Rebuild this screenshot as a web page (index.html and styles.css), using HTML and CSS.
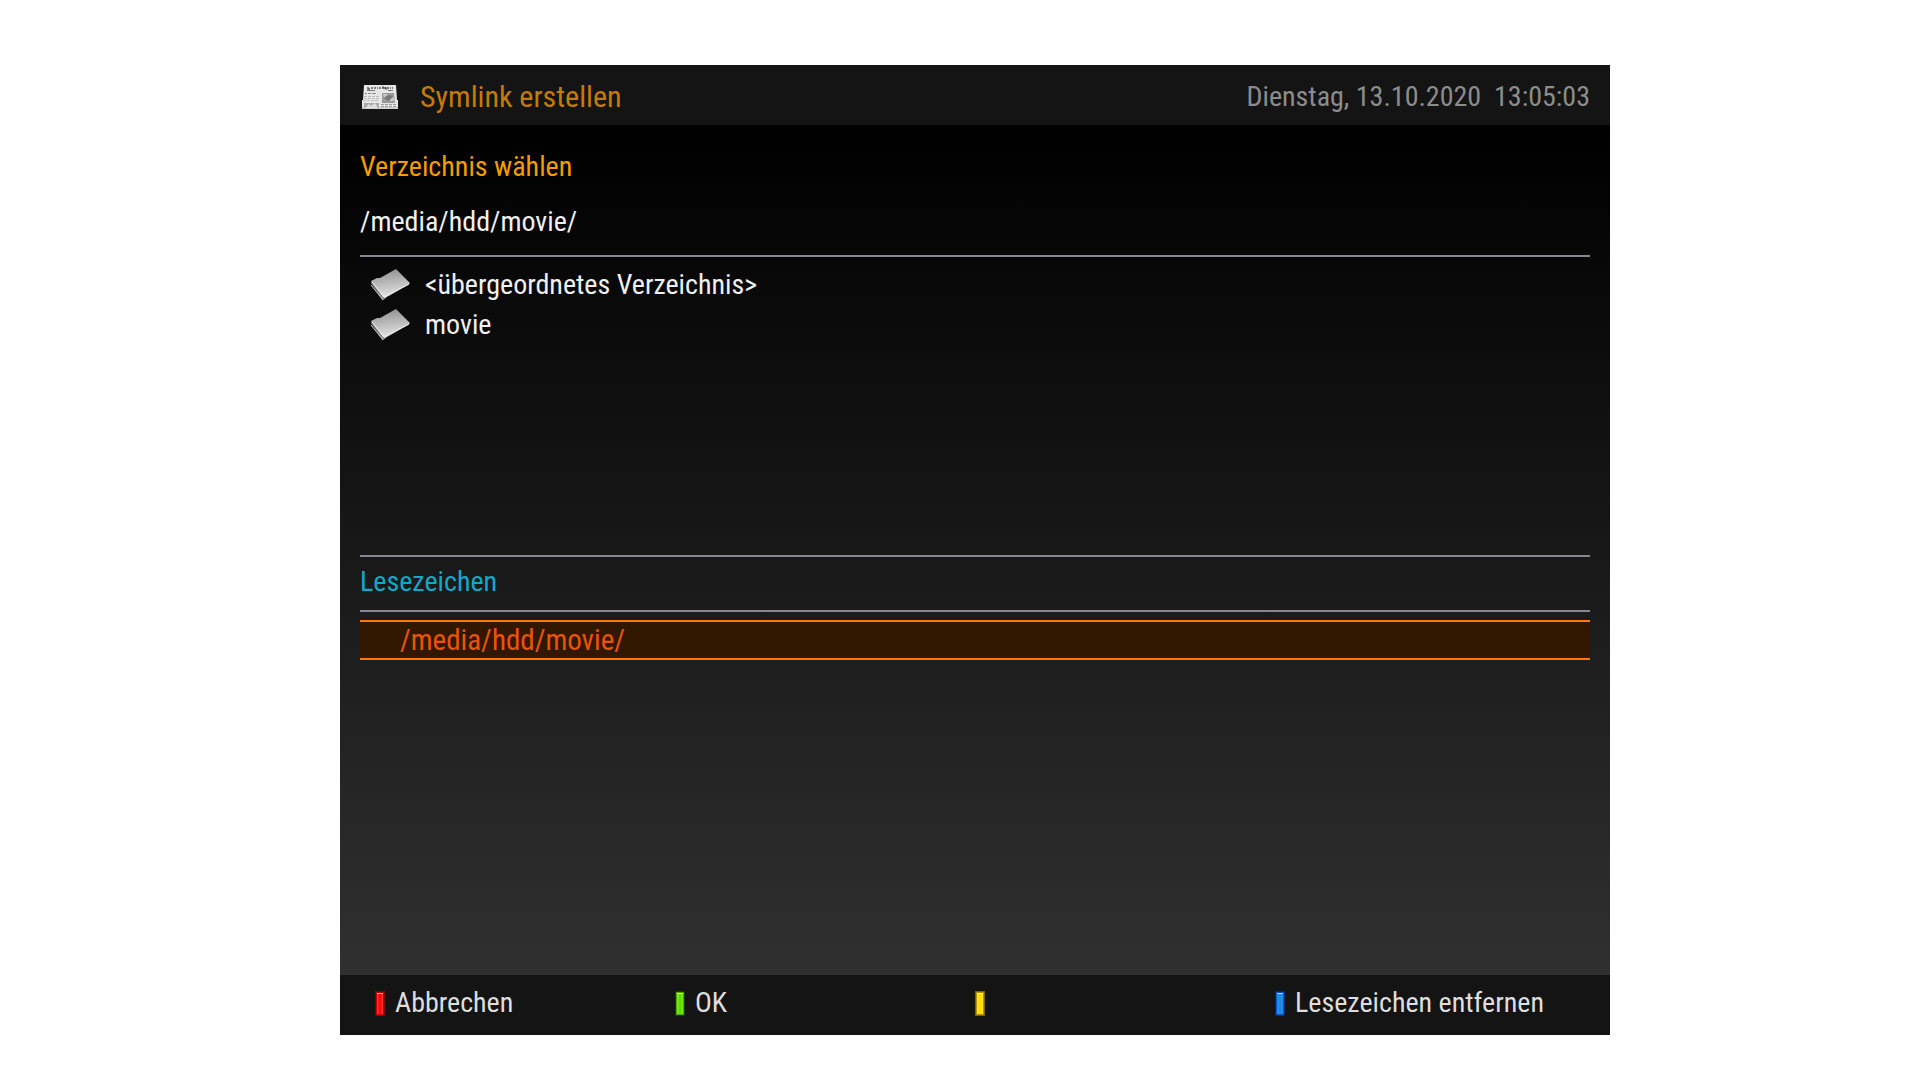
FILE: index.html
```html
<!DOCTYPE html>
<html lang="de">
<head>
  <meta charset="UTF-8" />
  <meta name="viewport" content="width=device-width, initial-scale=1.0" />
  <title>Symlink erstellen</title>
  <link rel="stylesheet" href="styles.css">
</head>
<body>
  <div class="screen">
    <header class="header">
      <svg class="news-icon" viewBox="0 0 36 24" aria-hidden="true">
        <path d="M2 0H34L35 15H36V24H0V15H1Z" fill="#e6e6e6"/>
        <path d="M0 22H36V24H0Z" fill="#d0d0d0"/>
        <path d="M6 2v2h2M9 3h2M12 3h2M15 3h1M17 3h2M21 4V2l3 2V2M25 3h2M28 3h1M30 3h1" fill="none" stroke="#555" stroke-width="1.400"/>
        <path d="M5 5.500h8M26 5.500h5" stroke="#777"/>
        <path d="M3 8.500h2M6 8.500h3M10 8.500h4" stroke="#888"/>
        <path d="M2 11.500h16M2 13.500h16M1 15.500h15" stroke="#bbb" stroke-dasharray="3 1"/>
        <path d="M20 8H32L33 18H20Z" fill="#999"/>
        <path d="M21 9h5l-4 4zM28 14l4-2v4h-5z" fill="#c8c8c8"/>
        <path d="M22 13l5-3 4 1-4 5z" fill="#777"/>
        <path d="M2 18H17V23H2Z" fill="#aaa"/>
        <path d="M3 23l4-4 2 2 4-3 3 5z" fill="#ddd"/>
        <path d="M19 19.500h16M19 21.500h16" stroke="#999" stroke-dasharray="3 1"/>
      </svg>
      <h1 class="title">Symlink erstellen</h1>
      <time class="clock" datetime="2020-10-13T13:05:03">Dienstag, 13.10.2020&nbsp; 13:05:03</time>
    </header>

    <main class="content">
      <section class="directory">
        <h2>Verzeichnis wählen</h2>
        <p class="path">/media/hdd/movie/</p>
        <ul class="file-list">
          <li>
            <svg class="folder-icon" viewBox="0 0 40 32" aria-hidden="true">
              <defs>
                <linearGradient id="folder" x1="0.400" y1="0" x2="0.550" y2="1">
                  <stop offset="0" stop-color="#909090"/>
                  <stop offset="1" stop-color="#e8e8e8"/>
                </linearGradient>
              </defs>
              <path d="M1 14L13 31L16 29L3 11Z" fill="#888"/>
              <path d="M1 16L13 31" stroke="#ddd"/>
              <path d="M1 12L7 9L10 9L26 0L40 14L38 16L15 29L13 28Z" fill="url(#folder)"/>
              <path d="M2 13L14 28L39 15" fill="none" stroke="#eee"/>
            </svg>
            <span>&lt;übergeordnetes Verzeichnis&gt;</span>
          </li>
          <li>
            <svg class="folder-icon" viewBox="0 0 40 32" aria-hidden="true">
              <path d="M1 14L13 31L16 29L3 11Z" fill="#888"/>
              <path d="M1 16L13 31" stroke="#ddd"/>
              <path d="M1 12L7 9L10 9L26 0L40 14L38 16L15 29L13 28Z" fill="url(#folder)"/>
              <path d="M2 13L14 28L39 15" fill="none" stroke="#eee"/>
            </svg>
            <span>movie</span>
          </li>
        </ul>
      </section>

      <section class="bookmarks">
        <h2>Lesezeichen</h2>
        <ul class="bookmark-list">
          <li class="selected">/media/hdd/movie/</li>
        </ul>
      </section>
    </main>

    <footer class="footer">
      <button class="btn" type="button"><span class="key red"></span>Abbrechen</button>
      <button class="btn" type="button"><span class="key green"></span>OK</button>
      <button class="btn" type="button" aria-label="Gelb"><span class="key yellow"></span></button>
      <button class="btn" type="button"><span class="key blue"></span>Lesezeichen entfernen</button>
    </footer>
  </div>
</body>
</html>
```

FILE: styles.css
```css
* {
  box-sizing: border-box;
}
body {
  margin: 0;
  padding: 65px 310px 45px 340px;
  min-height: 100vh;
  display: flex;
  background: #fff;
  font-family: "Roboto Condensed", Roboto, sans-serif;
  font-size: 28px;
  line-height: 40px;
}
h1, h2, p, ul {
  margin: 0;
  padding: 0;
  font-size: inherit;
  font-weight: normal;
  list-style: none;
}
.screen {
  flex: 1;
  display: flex;
  flex-direction: column;
  background: #141414;
}

/* title bar */
.header {
  display: flex;
  align-items: center;
  min-height: 60px;
  padding: 4px 20px 0 22px;
}
.news-icon {
  width: 36px;
  height: 24px;
  margin-right: 22px;
}
.header .title {
  flex: 1;
  font-size: 30px;
  color: #c57b07;
}
.clock {
  color: #8c8c8c;
}

/* lists */
.content {
  flex: 1;
  padding: 22px 20px 0;
  background: linear-gradient(#000, #303030);
}
.directory h2 {
  color: #f59c00;
}
.path {
  padding: 15px 0 13px;
  border-bottom: 2px solid #858794;
  color: #f0f0f0;
}
.file-list {
  min-height: 300px;
  padding-top: 8px;
  border-bottom: 2px solid #858794;
  color: #f0f0f0;
}
.file-list li {
  display: flex;
  align-items: center;
  gap: 15px;
  padding-left: 10px;
}
.folder-icon {
  width: 40px;
  height: 32px;
}
.bookmarks h2 {
  padding: 5px 0 8px;
  border-bottom: 2px solid #858794;
  color: #12a8c8;
}
.bookmark-list {
  padding-top: 8px;
}
.bookmark-list li {
  padding-left: 40px;
}
.bookmark-list .selected {
  border: solid #ff7b00;
  border-width: 2px 0;
  background: #321800;
  color: #ea5406;
  font-size: 29px;
  line-height: 36px;
}

/* colour keys */
.footer {
  display: grid;
  grid-template-columns: repeat(4, 1fr);
  align-items: center;
  min-height: 60px;
  padding: 0 35px 4px;
}
.btn {
  display: flex;
  align-items: center;
  gap: 10px;
  padding: 0;
  border: none;
  background: none;
  color: #dedede;
  font: inherit;
  white-space: nowrap;
  cursor: pointer;
}
.key {
  width: 10px;
  height: 25px;
  border: 1px solid;
}
.red {
  border-color: #780000;
  background: linear-gradient(90deg, #ff4a40, #f00, #ff4a40);
  box-shadow: inset 0 0 0 1px #c80000, inset 0 2px #ffb0a0;
}
.green {
  border-color: #143c00;
  background: linear-gradient(90deg, #8cf500, #5cd800, #8cf500);
  box-shadow: inset 0 0 0 1px #46a800, inset 0 2px #d0ff90;
}
.yellow {
  border-color: #7d6000;
  background: linear-gradient(90deg, #ffe930, #ffd800, #ffe930);
  box-shadow: inset 0 0 0 1px #b49000, inset 0 2px #fff6a0;
}
.blue {
  border-color: #00286e;
  background: linear-gradient(90deg, #0a96ff, #2884e0, #0a96ff);
  box-shadow: inset 0 0 0 1px #0058c8, inset 0 2px #a0dcff;
}
```
